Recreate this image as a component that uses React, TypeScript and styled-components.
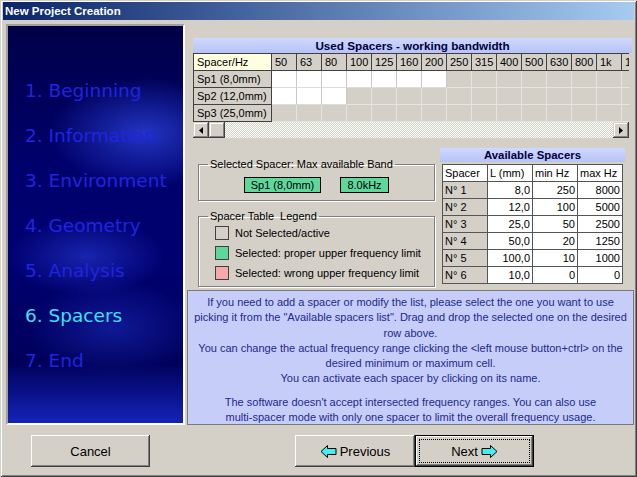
import styled, { createGlobalStyle } from 'styled-components';

const GlobalStyle = createGlobalStyle`
  html, body {
    margin: 0;
    padding: 0;
    background: #d4d0c8;
  }
  body {
    font-family: 'Liberation Sans', Arial, sans-serif;
    font-size: 11px;
    color: #000;
  }
  * {
    box-sizing: border-box;
  }
`;

const STEPS = [
  '1. Beginning',
  '2. Information',
  '3. Environment',
  '4. Geometry',
  '5. Analysis',
  '6. Spacers',
  '7. End',
];
const ACTIVE_STEP = 5;

const BANDS = ['50', '63', '80', '100', '125', '160', '200', '250', '315', '400', '500', '630', '800', '1k', '1.25k'];

const USED = [
  { name: 'Sp1 (8,0mm)', active: 7 },
  { name: 'Sp2 (12,0mm)', active: 3 },
  { name: 'Sp3 (25,0mm)', active: 0 },
];

const AVAILABLE = [
  ['N° 1', '8,0', '250', '8000'],
  ['N° 2', '12,0', '100', '5000'],
  ['N° 3', '25,0', '50', '2500'],
  ['N° 4', '50,0', '20', '1250'],
  ['N° 5', '100,0', '10', '1000'],
  ['N° 6', '10,0', '0', '0'],
];

const LEGEND = [
  { color: '#d4d0c8', label: 'Not Selected/active' },
  { color: '#5fd79b', label: 'Selected: proper upper frequency limit' },
  { color: '#f5a9aa', label: 'Selected: wrong upper frequency limit' },
];

const ArrowIcon = ({ dir }: { dir: 'left' | 'right' }) => (
  <svg width="17" height="13" viewBox="0 0 17 13" style={{ transform: dir === 'right' ? 'scaleX(-1)' : undefined }}>
    <polygon
      points="1,6.5 7.5,0.5 7.5,3.5 16,3.5 16,9.5 7.5,9.5 7.5,12.5"
      fill="#3ff0f2"
      stroke="#000"
      strokeWidth="1"
    />
  </svg>
);

const ScrollGlyph = ({ dir }: { dir: 'left' | 'right' }) => (
  <svg width="4" height="7" viewBox="0 0 4 7">
    {dir === 'left' ? <polygon points="4,0 0,3.5 4,7" fill="#000" /> : <polygon points="0,0 4,3.5 0,7" fill="#000" />}
  </svg>
);

const App = () => {
  return (
    <>
      <GlobalStyle />
      <Window>
        <TitleBar>New Project Creation</TitleBar>
        <Main>
          <StepPanel>
            {STEPS.map((step, i) => (
              <Step key={step} $active={i === ACTIVE_STEP}>
                {step}
              </Step>
            ))}
          </StepPanel>
          <RightColumn>
            <TopArea>
              <Band>Used Spacers - working bandwidth</Band>
              <UsedGrid>
                <GridRow>
                  <CornerCell>Spacer/Hz</CornerCell>
                  {BANDS.map((b) => (
                    <HeadCell key={b}>{b}</HeadCell>
                  ))}
                </GridRow>
                {USED.map((row) => (
                  <GridRow key={row.name}>
                    <RowHead>{row.name}</RowHead>
                    {BANDS.map((b, i) => (
                      <DataCell key={b} $on={i < row.active} />
                    ))}
                  </GridRow>
                ))}
              </UsedGrid>
              <ScrollBar>
                <ScrollButton>
                  <ScrollGlyph dir="left" />
                </ScrollButton>
                <ScrollButton />
                <ScrollTrack />
                <ScrollButton>
                  <ScrollGlyph dir="right" />
                </ScrollButton>
              </ScrollBar>
              <MiddleRow>
                <GroupColumn>
                  <Group $height={43}>
                    <GroupLegend>Selected Spacer: Max available Band</GroupLegend>
                    <SelectedRow>
                      <GreenTag $width={77}>Sp1 (8,0mm)</GreenTag>
                      <GreenTag $width={49}>8.0kHz</GreenTag>
                    </SelectedRow>
                  </Group>
                  <Group $height={77} $gap={9}>
                    <GroupLegend>Spacer Table&nbsp; Legend</GroupLegend>
                    <LegendList>
                      {LEGEND.map((item) => (
                        <LegendItem key={item.label}>
                          <Swatch $color={item.color} />
                          {item.label}
                        </LegendItem>
                      ))}
                    </LegendList>
                  </Group>
                </GroupColumn>
                <AvailableColumn>
                  <Band $small>Available Spacers</Band>
                  <SpacerTable>
                    <thead>
                      <tr>
                        <Th>Spacer</Th>
                        <Th>L (mm)</Th>
                        <Th>min Hz</Th>
                        <Th>max Hz</Th>
                      </tr>
                    </thead>
                    <tbody>
                      {AVAILABLE.map((r) => (
                        <tr key={r[0]}>
                          <RowTh>{r[0]}</RowTh>
                          <Td>{r[1]}</Td>
                          <Td>{r[2]}</Td>
                          <Td>{r[3]}</Td>
                        </tr>
                      ))}
                    </tbody>
                  </SpacerTable>
                </AvailableColumn>
              </MiddleRow>
            </TopArea>
            <InfoPanel>
              If you need to add a spacer or modify the list, please select the one you want to use
              <br />
              picking it from the "Available spacers list". Drag and drop the selected one on the desired
              <br />
              row above.
              <br />
              You can change the actual frequency range clicking the &lt;left mouse button+ctrl&gt; on the
              <br />
              desired minimum or maximum cell.
              <br />
              You can activate each spacer by clicking on its name.
              <BlankLine />
              The software doesn't accept intersected frequency ranges. You can also use
              <br />
              multi-spacer mode with only one spacer to limit the overall frequency usage.
            </InfoPanel>
          </RightColumn>
        </Main>
        <Footer>
          <Button $width={119}>Cancel</Button>
          <NavGroup>
            <Button $width={120}>
              <ArrowIcon dir="left" />
              Previous
            </Button>
            <Button $width={119} $default>
              Next
              <ArrowIcon dir="right" />
            </Button>
          </NavGroup>
        </Footer>
      </Window>
    </>
  );
};

export default App;

const Window = styled.div`
  width: 637px;
  height: 477px;
  display: flex;
  flex-direction: column;
  padding: 2px 3px 3px 3px;
  background: #d4d0c8;
  box-shadow: inset 1px 1px #d4d0c8, inset -1px -1px #404040, inset 2px 2px #fff, inset -2px -2px #808080;
`;

const TitleBar = styled.div`
  height: 18px;
  display: flex;
  align-items: center;
  padding-left: 2px;
  background: linear-gradient(to right, #0a246a, #a6caf0);
  color: #fff;
  font-weight: bold;
  font-size: 11.5px;
`;

const Main = styled.div`
  display: flex;
  height: 408px;
`;

const StepPanel = styled.div`
  width: 179px;
  margin: 4px 2px 3px 3px;
  padding: 42px 0 0 17px;
  border: 2px solid;
  border-color: #a0a0a0 #fff #fff #a0a0a0;
  background:
    radial-gradient(ellipse 55% 14% at 78% 27%, rgba(45, 70, 225, 0.75), transparent),
    radial-gradient(ellipse 45% 10% at 45% 58%, rgba(40, 60, 215, 0.6), transparent),
    radial-gradient(ellipse 50% 12% at 60% 76%, rgba(30, 50, 200, 0.5), transparent),
    linear-gradient(to bottom, #000048 0%, #00006c 35%, #000070 60%, #00005a 85%, #1424b8 100%);
`;

const Step = styled.div<{ $active?: boolean }>`
  height: 45px;
  line-height: 45px;
  font-family: 'DejaVu Sans', Verdana, sans-serif;
  font-size: 18.5px;
  white-space: nowrap;
  color: ${({ $active }) => ($active ? '#3fe0f2' : '#2024e0')};
`;

const RightColumn = styled.div`
  flex: 1;
  display: flex;
  flex-direction: column;
`;

const TopArea = styled.div`
  flex: 1;
  padding: 18px 2px 0 6px;
`;

const Band = styled.div<{ $small?: boolean }>`
  height: ${({ $small }) => ($small ? '14px' : '15px')};
  display: flex;
  align-items: center;
  justify-content: center;
  background: linear-gradient(#d0d8ff, #b6c3f6);
  color: #00003c;
  font-weight: bold;
  font-size: ${({ $small }) => ($small ? '11.4px' : '11.7px')};
`;

const UsedGrid = styled.div`
  width: 436px;
  overflow: hidden;
  border-top: 1px solid #404040;
  border-left: 1px solid #404040;
`;

const GridRow = styled.div`
  display: flex;
  height: 17px;
`;

const BaseCell = styled.div`
  flex: 0 0 25px;
  height: 17px;
  display: flex;
  align-items: center;
  padding-left: 3px;
  white-space: nowrap;
  overflow: hidden;
  font-size: 11px;
`;

const CornerCell = styled(BaseCell)`
  flex-basis: 78px;
  background: #ffffe1;
  border-right: 1px solid #404040;
  border-bottom: 1px solid #404040;
`;

const HeadCell = styled(BaseCell)`
  background: #d4d0c8;
  border-right: 1px solid #404040;
  border-bottom: 1px solid #404040;
`;

const RowHead = styled(BaseCell)`
  flex-basis: 78px;
  background: #d4d0c8;
  border-right: 1px solid #404040;
  border-bottom: 1px solid #404040;
`;

const DataCell = styled(BaseCell)<{ $on?: boolean }>`
  background: ${({ $on }) => ($on ? '#fff' : '#d4d0c8')};
  border-right: 1px solid ${({ $on }) => ($on ? '#c8c8c8' : '#e6e4de')};
  border-bottom: 1px solid ${({ $on }) => ($on ? '#dcdcdc' : '#e6e4de')};
`;

const ScrollBar = styled.div`
  display: flex;
  width: 436px;
  height: 16px;
`;

const ScrollButton = styled.div`
  width: 16px;
  height: 16px;
  display: flex;
  align-items: center;
  justify-content: center;
  background: #d4d0c8;
  box-shadow: inset -1px -1px #404040, inset 1px 1px #d4d0c8, inset -2px -2px #808080, inset 2px 2px #fff;
`;

const ScrollTrack = styled.div`
  flex: 1;
  background: repeating-conic-gradient(#fff 0 25%, #d4d0c8 0 50%) 0 0 / 2px 2px;
`;

const MiddleRow = styled.div`
  display: flex;
  margin-top: 10px;
`;

const GroupColumn = styled.div`
  width: 237px;
  margin-left: 5px;
  display: flex;
  flex-direction: column;
`;

const Group = styled.fieldset<{ $height: number; $gap?: number }>`
  height: ${({ $height }) => $height}px;
  margin: ${({ $gap }) => $gap ?? 10}px 0 0 0;
  padding: 0 6px;
  border: 1px solid #808080;
  box-shadow: 1px 1px 0 #fff, inset 1px 1px 0 #fff;
`;

const GroupLegend = styled.legend`
  margin-left: 3px;
  padding: 0 2px;
  line-height: 13px;
  font-size: 11px;
`;

const SelectedRow = styled.div`
  display: flex;
  justify-content: center;
  gap: 19px;
  margin-top: 6px;
`;

const GreenTag = styled.div<{ $width: number }>`
  width: ${({ $width }) => $width}px;
  height: 16px;
  display: flex;
  align-items: center;
  justify-content: center;
  background: #5fd79b;
  border: 1px solid #000;
  font-size: 11px;
`;

const LegendList = styled.div`
  display: flex;
  flex-direction: column;
  gap: 6px;
  margin-top: 3px;
  padding-left: 10px;
`;

const LegendItem = styled.div`
  display: flex;
  align-items: center;
  gap: 6px;
  height: 14px;
  font-size: 11px;
`;

const Swatch = styled.div<{ $color: string }>`
  width: 14px;
  height: 14px;
  background: ${({ $color }) => $color};
  border: 1px solid #404040;
`;

const AvailableColumn = styled.div`
  width: 185px;
  margin-left: 5px;
`;

const SpacerTable = styled.table`
  width: 181px;
  margin: 2px 0 0 2px;
  border-collapse: collapse;
  table-layout: fixed;
  border: 1px solid #404040;
  font-size: 11px;

  td,
  th {
    border: 1px solid #555;
    height: 17px;
    padding: 0 2px;
    font-weight: normal;
    white-space: nowrap;
  }
`;

const Th = styled.th`
  background: #fff;
  text-align: left;
  height: 18px;
`;

const RowTh = styled.td`
  background: #d4d0c8;
  text-align: left;
`;

const Td = styled.td`
  background: #fff;
  text-align: right;
`;

const InfoPanel = styled.div`
  height: 135px;
  margin-bottom: 3px;
  padding-top: 4px;
  border: 1px solid #7a7a7a;
  background: #c6cdf8;
  color: #1c2a8c;
  text-align: center;
  font-size: 11px;
  line-height: 15.3px;
  white-space: nowrap;
`;

const BlankLine = styled.div`
  height: 8px;
`;

const Footer = styled.div`
  flex: 1;
  display: flex;
  align-items: flex-start;
  padding: 7px 0 0 28px;
`;

const NavGroup = styled.div`
  display: flex;
  margin-left: 145px;
`;

const Button = styled.button<{ $width: number; $default?: boolean }>`
  position: relative;
  width: ${({ $width }) => $width}px;
  height: 32px;
  display: flex;
  align-items: center;
  justify-content: center;
  gap: 3px;
  padding: 0;
  border: ${({ $default }) => ($default ? '1px solid #000' : 'none')};
  background: #d4d0c8;
  box-shadow: inset -1px -1px #404040, inset 1px 1px #fff, inset -2px -2px #808080, inset 2px 2px #d4d0c8;
  font-family: 'Liberation Sans', Arial, sans-serif;
  font-size: 13px;
  color: #000;

  &::after {
    content: '';
    display: ${({ $default }) => ($default ? 'block' : 'none')};
    position: absolute;
    inset: 3px;
    border: 1px dotted #000;
  }
`;
